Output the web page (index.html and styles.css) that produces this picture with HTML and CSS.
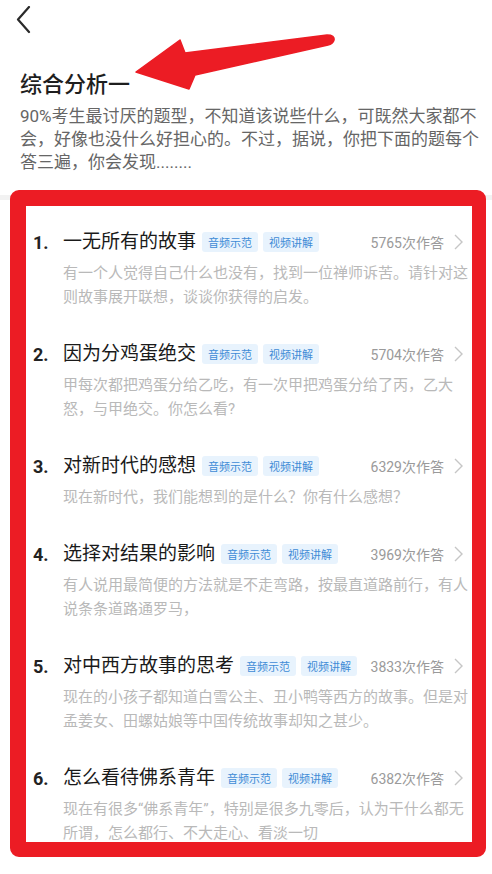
FILE: index.html
```html
<!DOCTYPE html>
<html lang="zh-CN">
<head>
<meta charset="utf-8">
<title>综合分析一</title>
<link rel="stylesheet" href="styles.css">
</head>
<body>
<div class="screen">
  <header class="header">
    <div class="nav">
      <svg class="back" width="16" height="28" viewBox="0 0 16 28"><polyline points="13,1 2,13.5 13,26" fill="none" stroke="#2a2a2a" stroke-width="2.2" stroke-linecap="round" stroke-linejoin="round"/></svg>
    </div>
    <h1 class="title">综合分析一</h1>
    <p class="intro">90%考生最讨厌的题型，不知道该说些什么，可既然大家都不会，好像也没什么好担心的。不过，据说，你把下面的题每个答三遍，你会发现........</p>
  </header>

  <section class="frame">
    <div class="list">
      <div class="item">
        <div class="row">
          <span class="num">1.</span><span class="name">一无所有的故事</span>
          <span class="tag">音频示范</span><span class="tag">视频讲解</span>
          <span class="count">5765次作答</span>
          <svg class="chev" width="9" height="16" viewBox="0 0 9 16"><polyline points="1,1 8,8 1,15" fill="none" stroke="#c6c6c6" stroke-width="1.4"/></svg>
        </div>
        <p class="desc">有一个人觉得自己什么也没有，找到一位禅师诉苦。请针对这则故事展开联想，谈谈你获得的启发。</p>
      </div>
      <div class="item">
        <div class="row">
          <span class="num">2.</span><span class="name">因为分鸡蛋绝交</span>
          <span class="tag">音频示范</span><span class="tag">视频讲解</span>
          <span class="count">5704次作答</span>
          <svg class="chev" width="9" height="16" viewBox="0 0 9 16"><polyline points="1,1 8,8 1,15" fill="none" stroke="#c6c6c6" stroke-width="1.4"/></svg>
        </div>
        <p class="desc">甲每次都把鸡蛋分给乙吃，有一次甲把鸡蛋分给了丙，乙大怒，与甲绝交。你怎么看?</p>
      </div>
      <div class="item">
        <div class="row">
          <span class="num">3.</span><span class="name">对新时代的感想</span>
          <span class="tag">音频示范</span><span class="tag">视频讲解</span>
          <span class="count">6329次作答</span>
          <svg class="chev" width="9" height="16" viewBox="0 0 9 16"><polyline points="1,1 8,8 1,15" fill="none" stroke="#c6c6c6" stroke-width="1.4"/></svg>
        </div>
        <p class="desc">现在新时代，我们能想到的是什么？你有什么感想？</p>
      </div>
      <div class="item">
        <div class="row">
          <span class="num">4.</span><span class="name">选择对结果的影响</span>
          <span class="tag">音频示范</span><span class="tag">视频讲解</span>
          <span class="count">3969次作答</span>
          <svg class="chev" width="9" height="16" viewBox="0 0 9 16"><polyline points="1,1 8,8 1,15" fill="none" stroke="#c6c6c6" stroke-width="1.4"/></svg>
        </div>
        <p class="desc">有人说用最简便的方法就是不走弯路，按最直道路前行，有人说条条道路通罗马，</p>
      </div>
      <div class="item">
        <div class="row">
          <span class="num">5.</span><span class="name">对中西方故事的思考</span>
          <span class="tag">音频示范</span><span class="tag">视频讲解</span>
          <span class="count">3833次作答</span>
          <svg class="chev" width="9" height="16" viewBox="0 0 9 16"><polyline points="1,1 8,8 1,15" fill="none" stroke="#c6c6c6" stroke-width="1.4"/></svg>
        </div>
        <p class="desc">现在的小孩子都知道白雪公主、丑小鸭等西方的故事。但是对孟姜女、田螺姑娘等中国传统故事却知之甚少。</p>
      </div>
      <div class="item">
        <div class="row">
          <span class="num">6.</span><span class="name">怎么看待佛系青年</span>
          <span class="tag">音频示范</span><span class="tag">视频讲解</span>
          <span class="count">6382次作答</span>
          <svg class="chev" width="9" height="16" viewBox="0 0 9 16"><polyline points="1,1 8,8 1,15" fill="none" stroke="#c6c6c6" stroke-width="1.4"/></svg>
        </div>
        <p class="desc">现在有很多“佛系青年”，特别是很多九零后，认为干什么都无所谓，怎么都行、不大走心、看淡一切</p>
      </div>
    </div>
  </section>

  <svg class="arrow" width="492" height="100" viewBox="0 0 492 100">
    <path d="M136,72 L180,40 L185,53 L327,35 Q335,35 334,40 Q333,44 328,45 L195,75 L189,89 Z" fill="#ec1c24" stroke="#ec1c24" stroke-width="1.5" stroke-linejoin="round"/>
  </svg>
</div>
</body>
</html>
```

FILE: styles.css
```css
* { box-sizing: border-box; }
html, body { margin: 0; padding: 0; }
body {
  background: #ffffff;
  font-family: "Roboto", "Noto Sans CJK SC", sans-serif;
  color: #1e1e1e;
}
.screen {
  position: relative;
  width: 492px;
  height: 874px;
  overflow: hidden;
  background: linear-gradient(#ffffff 195px, #f2f2f2 195px, #f2f2f2 200px, #ffffff 200px);
}
.header {
  padding: 0 0 16px 20px;
}
.nav {
  height: 40px;
  display: flex;
  align-items: center;
  margin-left: -4px;
}
.back { display: block; }
.title {
  margin: 30px 0 0 0;
  font-size: 22px;
  line-height: 30px;
  font-weight: 500;
  color: #1e1e1e;
}
.intro {
  margin: 5px 0 0 0;
  padding-right: 10px;
  font-size: 17px;
  line-height: 23px;
  color: #666666;
}
.frame {
  margin-left: 10px;
  width: 476px;
  height: 667px;
  border-style: solid;
  border-color: #ec1c24;
  border-width: 16px 14px 15px 16px;
  border-radius: 9px;
  background: #ffffff;
  overflow: hidden;
}
.list {
  padding-top: 24px;
  display: flex;
  flex-direction: column;
  gap: 33px;
}
.item { padding-left: 7px; }
.row {
  display: flex;
  align-items: center;
  height: 24px;
  padding-right: 9px;
}
.num {
  width: 30px;
  flex: none;
  font-size: 18px;
  font-weight: 700;
  color: #222222;
}
.name {
  font-size: 19px;
  line-height: 24px;
  color: #1a1a1a;
  white-space: nowrap;
}
.tag {
  margin-left: 5px;
  height: 20px;
  padding: 0 6px;
  display: inline-flex;
  align-items: center;
  font-size: 11px;
  color: #3f8bd6;
  background: #e8f3fd;
  border-radius: 3px;
  white-space: nowrap;
}
.name + .tag { margin-left: 6px; }
.count {
  margin-left: auto;
  font-size: 14px;
  color: #9a9a9a;
  white-space: nowrap;
}
.chev {
  display: block;
  margin-left: 10px;
  flex: none;
}
.desc {
  margin: 7px 0 0 30px;
  font-size: 15px;
  line-height: 24px;
  color: #b9b9b9;
}
.arrow {
  position: absolute;
  left: 0;
  top: 0;
  pointer-events: none;
}
```
